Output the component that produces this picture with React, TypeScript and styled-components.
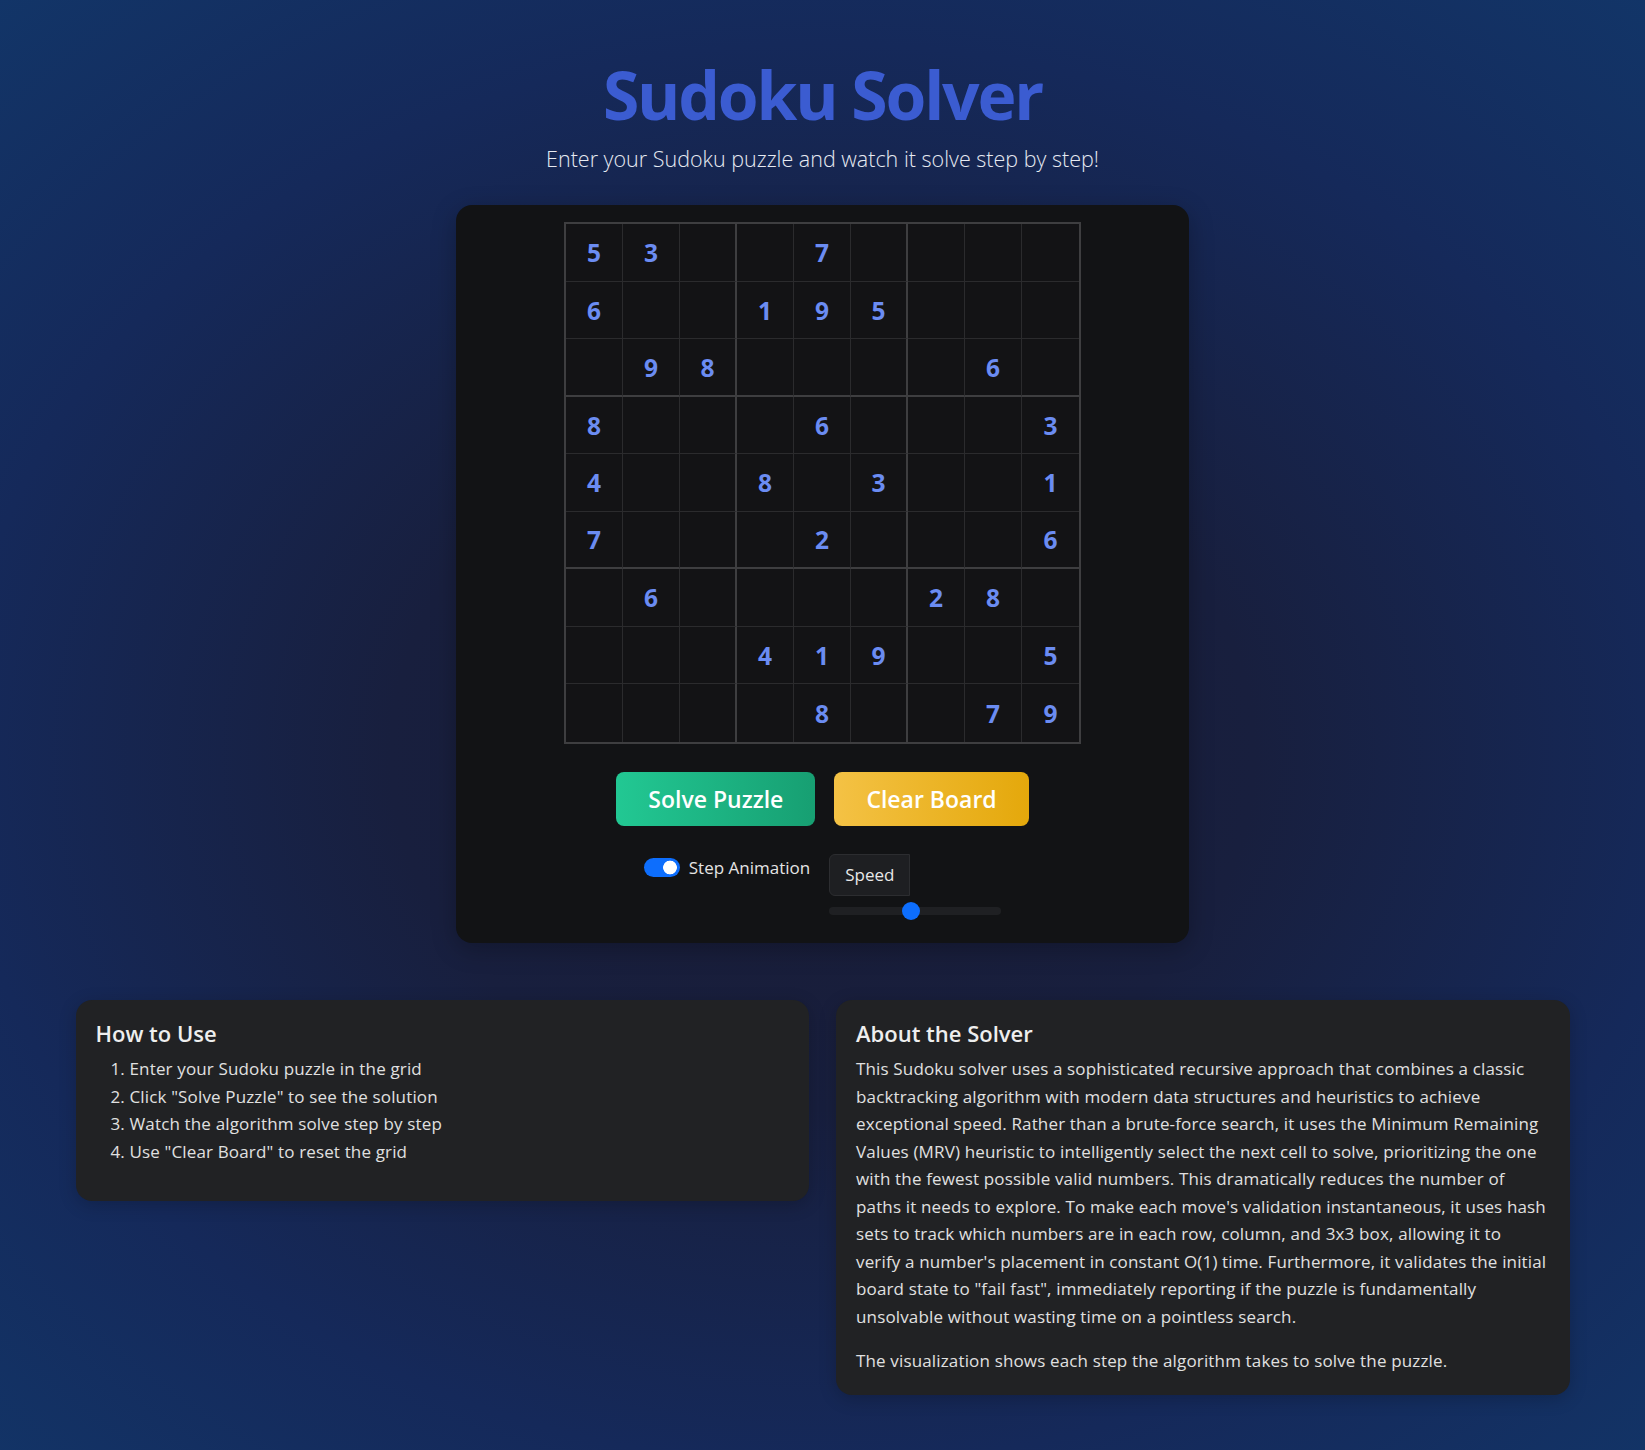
import React from "react";
import styled, { createGlobalStyle } from "styled-components";

const GlobalStyle = createGlobalStyle`
  html, body {
    margin: 0;
    padding: 0;
    min-height: 100%;
  }
  body {
    font-family: "Open Sans", "Noto Sans", sans-serif;
    color: #e2e2e2;
    background: radial-gradient(ellipse 75% 70% at 50% 52%, #191c36 0%, #181f3e 35%, #15295a 70%, #123568 100%);
    min-height: 1450px;
  }
  * { box-sizing: border-box; }
`;

const Page = styled.div`
  padding: 55px 0 55px;
  display: flex;
  flex-direction: column;
  align-items: center;
`;

const Header = styled.header`
  display: flex;
  flex-direction: column;
  align-items: center;
`;

const Title = styled.h1`
  margin: 0;
  font-size: 66px;
  line-height: 1.2;
  font-weight: 700;
  letter-spacing: -2.2px;
  color: #3b5cd1;
`;

const Subtitle = styled.p`
  margin: 10px 0 0;
  font-size: 21.5px;
  line-height: 1.4;
  font-weight: 300;
  color: #e6eaf2;
`;

const BoardCard = styled.section`
  margin-top: 31px;
  width: 733px;
  background: #121315;
  border-radius: 16px;
  padding: 17px 0 23px;
  display: flex;
  flex-direction: column;
  align-items: center;
  box-shadow: 0 6px 24px rgba(0, 0, 0, 0.25);
`;

const Grid = styled.div`
  display: grid;
  grid-template-columns: repeat(9, 57px);
  grid-template-rows: repeat(9, 57.5px);
  border: 2px solid #3e3e40;
  background: #131315;
`;

const Cell = styled.div<{ $thickRight: boolean; $thickBottom: boolean; $lastCol: boolean; $lastRow: boolean }>`
  display: flex;
  align-items: center;
  justify-content: center;
  font-size: 24.5px;
  font-weight: 700;
  color: #6b8cf2;
  border-right: ${(p) => (p.$lastCol ? "none" : p.$thickRight ? "2px solid #3e3e40" : "1px solid #2b2b2d")};
  border-bottom: ${(p) => (p.$lastRow ? "none" : p.$thickBottom ? "2px solid #3e3e40" : "1px solid #2b2b2d")};
`;

const Actions = styled.div`
  margin-top: 28px;
  display: flex;
  gap: 19px;
`;

const ActionButton = styled.button<{ $from: string; $to: string }>`
  height: 54px;
  padding: 0 32px;
  border: none;
  border-radius: 8px;
  font-family: "Open Sans", sans-serif;
  font-size: 23px;
  font-weight: 600;
  color: #ffffff;
  background: linear-gradient(90deg, ${(p) => p.$from}, ${(p) => p.$to});
  cursor: pointer;
`;

const Controls = styled.div`
  margin-top: 28px;
  display: flex;
  align-items: flex-start;
  justify-content: center;
  gap: 19px;
`;

const ToggleLabel = styled.label`
  display: flex;
  align-items: center;
  gap: 9px;
  height: 27px;
  font-size: 17px;
  color: #e4e4e4;
`;

const Switch = styled.input`
  appearance: none;
  margin: 0;
  width: 36px;
  height: 19px;
  border-radius: 10px;
  background: radial-gradient(circle at 26px 50%, #ffffff 0 6.5px, #0d6efd 7.2px);
  cursor: pointer;
`;

const SpeedGroup = styled.div`
  display: flex;
  flex-direction: column;
  align-items: flex-start;
  gap: 6px;
`;

const SpeedLabel = styled.span`
  height: 42px;
  padding: 0 15px;
  display: flex;
  align-items: center;
  font-size: 17px;
  color: #e8e8e8;
  background: #1e1f22;
  border: 1px solid #2c2d30;
  border-radius: 6px 0 0 6px;
`;

const Range = styled.input`
  appearance: none;
  -webkit-appearance: none;
  margin: 0;
  width: 172px;
  height: 18px;
  background: transparent;
  &::-webkit-slider-runnable-track {
    height: 8px;
    border-radius: 4px;
    background: #1f2023;
  }
  &::-webkit-slider-thumb {
    -webkit-appearance: none;
    width: 18px;
    height: 18px;
    margin-top: -5px;
    border-radius: 50%;
    background: #0d6efd;
    border: none;
  }
`;

const InfoRow = styled.div`
  margin-top: 57px;
  width: 1494px;
  display: grid;
  grid-template-columns: 1fr 1fr;
  gap: 27px;
  align-items: start;
`;

const InfoCard = styled.article`
  background: #212224;
  border-radius: 16px;
  padding: 20px;
  box-shadow: 0 4px 18px rgba(0, 0, 0, 0.2);
`;

const CardTitle = styled.h3`
  margin: 0 0 9px;
  font-size: 22px;
  line-height: 1.2;
  font-weight: 600;
  color: #eeeeee;
`;

const Steps = styled.ol`
  margin: 0 0 16px;
  padding-left: 34px;
  font-size: 17px;
  line-height: 1.62;
  letter-spacing: 0.15px;
  color: #e0e0e0;
`;

const Paragraph = styled.p<{ $last?: boolean }>`
  margin: 0 0 ${(p) => (p.$last ? "0" : "17px")};
  font-size: 17px;
  line-height: 1.62;
  letter-spacing: 0.15px;
  color: #e0e0e0;
`;

const puzzle: string[] = [
  "53..7....",
  "6..195...",
  ".98....6.",
  "8...6...3",
  "4..8.3..1",
  "7...2...6",
  ".6....28.",
  "...419..5",
  "....8..79",
];

export default function App() {
  return (
    <>
      <GlobalStyle />
      <Page>
        <Header>
          <Title>Sudoku Solver</Title>
          <Subtitle>Enter your Sudoku puzzle and watch it solve step by step!</Subtitle>
        </Header>
        <BoardCard>
          <Grid>
            {puzzle.map((row, r) =>
              row.split("").map((ch, c) => (
                <Cell
                  key={`${r}-${c}`}
                  $thickRight={c === 2 || c === 5}
                  $thickBottom={r === 2 || r === 5}
                  $lastCol={c === 8}
                  $lastRow={r === 8}
                >
                  {ch === "." ? "" : ch}
                </Cell>
              ))
            )}
          </Grid>
          <Actions>
            <ActionButton $from="#22c893" $to="#179f72">Solve Puzzle</ActionButton>
            <ActionButton $from="#f4c245" $to="#e4a80b">Clear Board</ActionButton>
          </Actions>
          <Controls>
            <ToggleLabel>
              <Switch type="checkbox" defaultChecked />
              <span>Step Animation</span>
            </ToggleLabel>
            <SpeedGroup>
              <SpeedLabel>Speed</SpeedLabel>
              <Range type="range" min={0} max={100} defaultValue={47} />
            </SpeedGroup>
          </Controls>
        </BoardCard>
        <InfoRow>
          <InfoCard>
            <CardTitle>How to Use</CardTitle>
            <Steps>
              <li>Enter your Sudoku puzzle in the grid</li>
              <li>Click "Solve Puzzle" to see the solution</li>
              <li>Watch the algorithm solve step by step</li>
              <li>Use "Clear Board" to reset the grid</li>
            </Steps>
          </InfoCard>
          <InfoCard>
            <CardTitle>About the Solver</CardTitle>
            <Paragraph>
              This Sudoku solver uses a sophisticated recursive approach that combines a classic
              backtracking algorithm with modern data structures and heuristics to achieve exceptional
              speed. Rather than a brute-force search, it uses the Minimum Remaining Values (MRV)
              heuristic to intelligently select the next cell to solve, prioritizing the one with the
              fewest possible valid numbers. This dramatically reduces the number of paths it needs to
              explore. To make each move's validation instantaneous, it uses hash sets to track which
              numbers are in each row, column, and 3x3 box, allowing it to verify a number's placement
              in constant O(1) time. Furthermore, it validates the initial board state to "fail fast",
              immediately reporting if the puzzle is fundamentally unsolvable without wasting time on a
              pointless search.
            </Paragraph>
            <Paragraph $last>
              The visualization shows each step the algorithm takes to solve the puzzle.
            </Paragraph>
          </InfoCard>
        </InfoRow>
      </Page>
    </>
  );
}
